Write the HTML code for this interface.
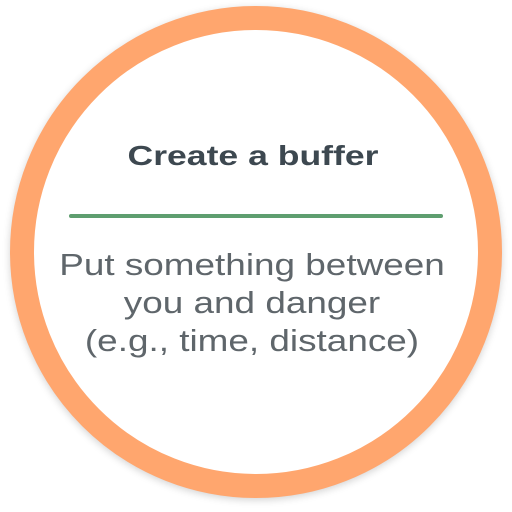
<!DOCTYPE html>
<html><head><style>
html,body{margin:0;padding:0;width:512px;height:512px;background:#fff;overflow:hidden}
.c{position:absolute;left:10px;top:6px;width:444px;height:444px;border:24px solid #FFA66E;border-radius:50%;box-shadow:0 2px 8px rgba(0,0,0,0.18);background:#fff}
.t{position:absolute;left:0;width:512px;text-align:center;font-family:"Liberation Sans",sans-serif}
.h{left:-3px;top:140px;font-size:28px;font-weight:bold;color:#3d4850;transform:scaleX(1.27)}
.line{position:absolute;left:69px;top:214px;width:374px;height:4px;background:#5e9e6f;border-radius:2px}
.b{left:-4px;top:246px;font-size:31px;line-height:38px;color:#5f666b;transform:scaleX(1.19)}
</style></head><body>
<div class="c"></div>
<div class="t h">Create a buffer</div>
<div class="line"></div>
<div class="t b">Put something between<br>you and danger<br>(e.g., time, distance)</div>
</body></html>
